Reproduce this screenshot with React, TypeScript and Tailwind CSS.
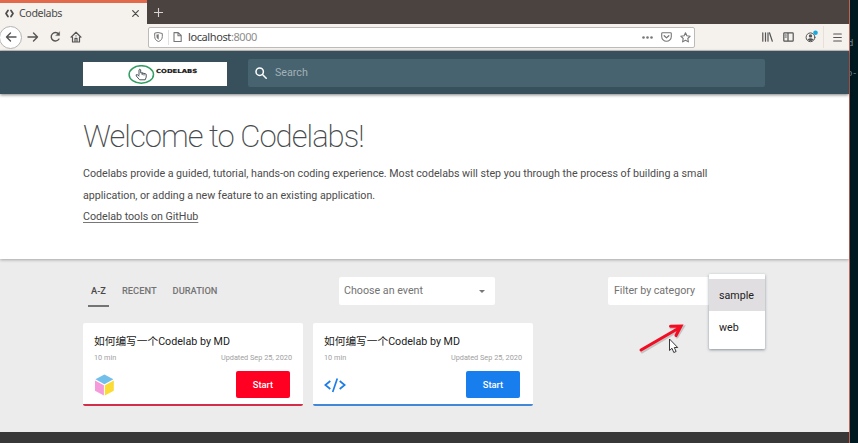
import React from 'react';

const stroke = { fill: 'none', stroke: 'currentColor', strokeLinecap: 'round', strokeLinejoin: 'round' } as const;

function TabBar() {
  return (
    <div className="flex h-6 items-stretch bg-[#4a4340] font-['Noto_Sans',sans-serif]">
      <div className="flex w-[147px] items-center border-t-[3px] border-[#e2694b] bg-[#f5f1ed] pl-[5px] text-[#4b4b4b]">
        <svg className="h-[9px] w-[9px]" viewBox="0 0 9 9" {...stroke} strokeWidth="1.7"><path d="M3 1.500 1 4.500 3 7.500M6 1.500 8 4.500 6 7.500" /></svg>
        <span className="ml-[5px] flex-1 text-[10.7px] tracking-[-0.4px]">Codelabs</span>
        <svg className="mr-[8px] h-[7px] w-[7px]" viewBox="0 0 7 7" {...stroke} strokeWidth="1.2"><path d="m.7.7 5.6 5.6m0-5.6L.7 6.3" /></svg>
      </div>
      <svg className="mt-[8px] ml-[7px] h-[9px] w-[9px] text-[#d8d3d0]" viewBox="0 0 9 9" {...stroke} strokeWidth="1.1"><path d="M4.5 0v9M0 4.5h9" /></svg>
    </div>
  );
}

function Toolbar() {
  return (
    <div className="flex h-[27px] items-center border-b border-[#c9c6c2] bg-[#f5f1ed] text-[#555]">
      <div className="-ml-px flex h-[23px] w-[23px] shrink-0 items-center justify-center rounded-full border border-[#b5b3b1] bg-white">
        <svg className="h-3 w-3" viewBox="0 0 12 12" {...stroke} strokeWidth="1.4"><path d="M11 6H1.5M5.5 2l-4 4 4 4" /></svg>
      </div>
      <svg className="ml-[5px] h-3 w-3 shrink-0" viewBox="0 0 12 12" {...stroke} strokeWidth="1.4"><path d="M1 6h9.5M6.5 2l4 4-4 4" /></svg>
      <svg className="ml-[10px] h-3 w-3 shrink-0" viewBox="0 0 12 12" {...stroke} strokeWidth="1.4"><path d="M10 8a4.2 4.2 0 1 1-.4-5" /><path d="M10.6 1v3.6H7Z" fill="currentColor" strokeWidth=".4" /></svg>
      <svg className="ml-[9px] h-3 w-3 shrink-0" viewBox="0 0 12 12" {...stroke} strokeWidth="1.2"><path d="M1 6.2 6 1.3l5 4.9M2.5 6v5h7V6M5 11V7.3h2V11M6 4.8v.2" /></svg>
      <div className="ml-[66px] flex h-[21px] w-[547px] shrink-0 items-center rounded-[2px] border border-[#bdbab7] bg-white text-[#777]">
        <svg className="ml-[5px] h-[10px] w-[9px]" viewBox="0 0 9 10" {...stroke} strokeWidth="1"><path d="M4.5.6 8.3 1.5v3C8.3 7 7 8.7 4.5 9.5 2 8.700.7 7 .7 4.500V1.500Z" /><path d="M4.500 2.500v4.800C3.200 6.500 2.700 5.700 2.700 4.300V3Z" fill="currentColor" strokeWidth=".4" /></svg>
        <div className="ml-[5px] h-[15px] w-px bg-[#e0e0e0]" />
        <svg className="ml-[4px] h-[10px] w-[9px]" viewBox="0 0 9 10" {...stroke} strokeWidth="1.1"><path d="M1 .6h4.200L8.200 3.500v6H1ZM5 .8v3h3" /></svg>
        <span className="ml-[6px] flex-1 font-['Noto_Sans',sans-serif] text-[11px] tracking-[-0.4px] text-[#3f3f3f]">localhost<span className="text-[#8d8d8d]">:8000</span></span>
        <svg className="h-[3px] w-[11px]" viewBox="0 0 11 3" fill="currentColor"><circle cx="1.500" cy="1.500" r="1.300" /><circle cx="5.500" cy="1.500" r="1.300" /><circle cx="9.500" cy="1.500" r="1.300" /></svg>
        <svg className="ml-[8px] h-[10px] w-[11px]" viewBox="0 0 11 10" {...stroke} strokeWidth="1.100"><path d="M1.500.7h8q.8 0 .8.8v3a4.800 4.800 0 0 1-9.600 0v-3q0-.8.8-.8Z" /><path d="m3.200 3.700 2.300 2.200 2.300-2.200" strokeWidth="1.300" /></svg>
        <svg className="ml-[8px] mr-[3px] h-[11px] w-[11px]" viewBox="0 0 11 11" {...stroke} strokeWidth="1.100"><path d="m5.500.8 1.400 3 3.300.4-2.400 2.300.6 3.400-2.900-1.700-2.900 1.700.6-3.400L.8 4.200l3.300-.4Z" /></svg>
      </div>
      <svg className="ml-[67px] h-[10px] w-[11px] shrink-0" viewBox="0 0 11 10" {...stroke} strokeWidth="1.200"><path d="M.8.8v8.400M3.500.8v8.400M6 .8v8.400M7.500.8l2.800 8.400" /></svg>
      <svg className="ml-[10px] h-[10px] w-[11px] shrink-0" viewBox="0 0 11 10" {...stroke} strokeWidth="1.200"><path d="M1.500.8h8q.7 0 .7.7v7q0 .7-.7.7h-8q-.7 0-.7-.7v-7q0-.7.7-.7ZM5 .8v8.400M2.300 3h1M2.300 5h1" /></svg>
      <svg className="ml-[11px] h-[14px] w-[14px] shrink-0" viewBox="0 0 14 14" {...stroke} strokeWidth="1"><circle cx="5.500" cy="7.300" r="4.400" /><circle cx="5.500" cy="5.900" r="1.700" fill="currentColor" stroke="none" /><path d="M2.500 9.500Q5.500 7 8.500 9.500 5.500 12.500 2.500 9.500Z" fill="currentColor" stroke="none" /><circle cx="10.500" cy="2.800" r="2.300" fill="#18a9df" stroke="none" /></svg>
      <div className="ml-[4px] h-[22px] w-px shrink-0 bg-[#e9dfd9]" />
      <svg className="ml-[9px] h-[9px] w-[9px] shrink-0" viewBox="0 0 9 9" {...stroke} strokeWidth="1.200"><path d="M.7 1h7.600M.7 4.500h7.600M.7 8h7.600" /></svg>
    </div>
  );
}

function SiteHeader() {
  return (
    <header className="relative z-10 flex h-[43px] items-center bg-[#37505b] pl-[83px] shadow-[0_1px_3px_rgba(0,0,0,0.5)]">
      <div className="mt-[3px] flex h-6 w-36 items-start bg-white pl-[45px]">
        <svg className="mt-[3px] h-[20px] w-[27px]" viewBox="0 0 27 20" {...stroke}>
          <ellipse cx="13.300" cy="9.500" rx="12.200" ry="8.800" stroke="#2f9e62" strokeWidth="1.500" />
          <path d="M11 10V4.800q.8-1.300 1.700 0v3.100h1.500l1.300.4 1.400.3 1.300.6v3l-1 2.600h-5.600L8.300 11q-.8-1.800 1-1.300L11 11M14.200 8v1.700M16 8.600v1.500" stroke="#39434a" strokeWidth=".9" />
        </svg>
        <span className="mt-[5px] ml-px origin-left scale-x-[1.25] font-['DejaVu_Sans',sans-serif] text-[5.500px] leading-[9px] font-bold text-[#171717] [-webkit-text-stroke:0.2px_#171717]">CODELABS</span>
      </div>
      <div className="ml-[21px] flex h-7 w-[517px] items-center rounded-[2px] bg-[#46636f]">
        <svg className="ml-[7px] h-3 w-3 text-white" viewBox="0 0 12 12" {...stroke} strokeWidth="1.500"><circle cx="4.700" cy="4.700" r="3.700" /><path d="m7.500 7.500 3.700 3.700" /></svg>
        <span className="ml-[8px] pt-px text-[10.7px] text-[#a4b1b7]">Search</span>
      </div>
    </header>
  );
}

function Welcome() {
  return (
    <section className="relative h-[165px] bg-white pt-[24px] pl-[83px] text-[#4c4c4c] shadow-[0_1px_3px_rgba(0,0,0,0.3)]">
      <h1 className="text-[31px] leading-[38px] font-extralight tracking-[-0.98px] whitespace-nowrap text-[#484b4d]">Welcome to Codelabs!</h1>
      <p className="mt-[7.400px] text-[10.7px] leading-[21.4px] tracking-[-0.018px] whitespace-nowrap">
        Codelabs provide a guided, tutorial, hands-on coding experience. Most codelabs will step you through the process of building a small<br />
        application, or adding a new feature to an existing application.<br />
        <a className="underline decoration-[#777] underline-offset-2">Codelab tools on GitHub</a>
      </p>
    </section>
  );
}

function CubeIcon() {
  return (
    <svg className="h-[22px] w-[21px]" viewBox="0 0 21 22">
      <path d="m10.400.5 9 4.700-9 5-9-5Z" fill="#72bfec" />
      <path d="m1 6.400 8.900 4.800v10.200L1 16.700Z" fill="#f59ada" />
      <path d="m19.800 6.400-8.900 4.800v10.200l8.900-4.700Z" fill="#fbdc35" />
    </svg>
  );
}

function CodeIcon() {
  return (
    <svg className="h-[22px] w-[22px]" viewBox="0 0 22 22" fill="none" stroke="#1b7de8" strokeWidth="1.700">
      <path d="m6.300 7-5 4 5 4M15.700 7l5 4-5 4M13.300 4.500l-4.600 13.500" />
    </svg>
  );
}

function Card({ icon, tone, button }: { icon: React.ReactNode; tone: string; button: string }) {
  return (
    <article className={`h-[83px] w-[220px] rounded-[2px] border-b-2 bg-white px-[11px] pt-[10px] ${tone}`}>
      <h2 className="text-[10.7px] leading-[18px] text-[#202020]">如何编写一个Codelab by MD</h2>
      <div className="mt-[2px] flex justify-between text-[7.3px] leading-[10px] text-[#a0a0a0]"><span>10 min</span><span>Updated Sep 25, 2020</span></div>
      <div className="mt-[8px] flex items-center justify-between">
        {icon}
        <button className={`mr-[2px] h-[27px] w-[54px] rounded-[2px] text-[9.3px] font-medium text-white ${button}`}>Start</button>
      </div>
    </article>
  );
}

function Catalog() {
  return (
    <main className="h-[173px] bg-[#ececec] pt-[17px] pl-[83px]">
      <div className="flex h-[47px] items-start">
        <nav className="flex w-[256px] pl-[5px] text-[9.3px] font-medium text-[#737373]">
          <span className="flex h-[31px] w-[21px] items-center justify-center border-b-2 border-[#747474] text-[#484848]">A-Z</span>
          <span className="ml-[13px] flex h-[29px] items-center">RECENT</span>
          <span className="ml-[16px] flex h-[29px] items-center">DURATION</span>
        </nav>
        <div className="mt-px flex h-7 w-[156px] items-center justify-between rounded-[2px] bg-white pr-[10px] pl-[5px] text-[10.7px] text-[#737373]">
          Choose an event
          <svg className="h-[3px] w-[6px]" viewBox="0 0 6 3"><path d="M0 0h6L3 3Z" fill="#777" /></svg>
        </div>
        <div className="relative mt-px ml-[113px] flex h-7 w-[157px] items-center rounded-[2px] bg-white pl-[6px] text-[10.7px] tracking-[-0.04px] text-[#737373]">
          Filter by category
          <ul className="absolute -top-[3px] left-[101px] h-[75px] w-[56px] rounded-[1px] bg-white pt-[5px] text-[10.7px] tracking-normal text-[#212121] shadow-[0_1px_3px_rgba(40,60,75,0.5)]">
            <li className="flex h-8 items-center bg-[#e1dee1] pt-[2px] pl-[10px]">sample</li>
            <li className="flex h-8 items-center pt-[2px] pl-[10px]">web</li>
          </ul>
        </div>
      </div>
      <div className="flex gap-[10px]">
        <Card icon={<CubeIcon />} tone="border-[#d22e4b]" button="bg-[#ff0023]" />
        <Card icon={<CodeIcon />} tone="border-[#4288d6]" button="bg-[#187eee]" />
      </div>
    </main>
  );
}

export default function App() {
  return (
    <div className="relative flex h-[443px] w-[858px] overflow-hidden bg-[#001820] font-[Roboto,'Noto_Sans_CJK_SC',sans-serif]">
      <div className="w-[850px] shrink-0 border-r border-[#bd6456]">
        <TabBar />
        <Toolbar />
        <SiteHeader />
        <Welcome />
        <Catalog />
        <footer className="h-[11px] bg-[#383838]" />
      </div>
      <aside className="flex w-2 flex-col overflow-hidden pt-[36px] font-['DejaVu_Sans_Mono',monospace] text-[9px] leading-[15px] whitespace-nowrap text-[#71858a]">
        <span className="-ml-[2px]">d</span>
        <span className="mt-[15px] -ml-[3px] tracking-[-0.5px]">o-</span>
      </aside>
      <svg className="absolute top-[318px] left-[634px] h-[40px] w-[56px]" viewBox="0 0 56 40" fill="none">
        <path d="m8 34 39-23M37 10l12-1-6 10" stroke="#777" strokeOpacity=".35" strokeWidth="3" strokeLinecap="round" />
        <path d="M7 32 45 10M36.500 8.300 47 8l-5 9.500" stroke="#f30c22" strokeWidth="3" strokeLinecap="round" />
        <path d="M35.500 21v11.500l2.500-2.200 1.800 4.200 2.300-1-1.800-4h3.400Z" fill="white" stroke="#252525" strokeWidth=".9" />
      </svg>
    </div>
  );
}
